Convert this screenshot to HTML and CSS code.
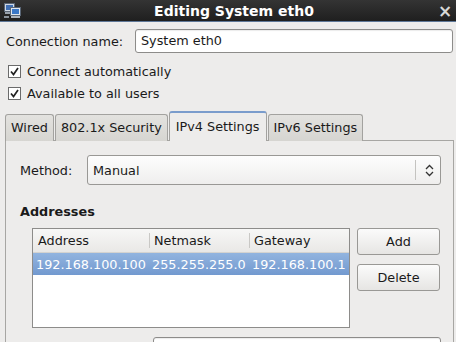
FILE: index.html
```html
<!DOCTYPE html>
<html lang="en">
<head>
  <meta charset="UTF-8" />
  <title>Editing System eth0</title>
  <link rel="stylesheet" href="styles.css">
</head>
<body>
  <div class="window">
    <div class="titlebar">
      <svg class="app-icon" width="18" height="16" viewBox="0 0 18 16">
        <rect x="0.5" y="0.5" width="10" height="8" fill="#cfd8e4" stroke="#5a6676"/>
        <rect x="2" y="2" width="7" height="5" fill="#3f6fb4"/>
        <rect x="1" y="9" width="9" height="2" fill="#9aa3ad"/>
        <rect x="6.5" y="4.5" width="10" height="8" fill="#dfe6ee" stroke="#5a6676"/>
        <rect x="8" y="6" width="7" height="5" fill="#3a78c8"/>
        <rect x="7" y="13" width="9" height="2" fill="#aeb6bf"/>
        <rect x="0" y="13" width="5" height="2" fill="#8a929b"/>
      </svg>
      <span class="title">Editing System eth0</span>
      <span class="close">×</span>
    </div>

    <div class="content">
      <div class="name-row">
        <label class="name-label">Connection name:</label>
        <div class="entry">System eth0</div>
      </div>

      <div class="checks">
        <div class="check-row">
          <svg class="check" width="13" height="13" viewBox="0 0 13 13">
            <rect x="0.5" y="0.5" width="12" height="12" fill="#fff" stroke="#6b6b6b"/>
            <path d="M3 6.5 L5.5 9.5 L10 3" fill="none" stroke="#222" stroke-width="1.7"/>
          </svg>
          <span>Connect automatically</span>
        </div>
        <div class="check-row">
          <svg class="check" width="13" height="13" viewBox="0 0 13 13">
            <rect x="0.5" y="0.5" width="12" height="12" fill="#fff" stroke="#6b6b6b"/>
            <path d="M3 6.5 L5.5 9.5 L10 3" fill="none" stroke="#222" stroke-width="1.7"/>
          </svg>
          <span>Available to all users</span>
        </div>
      </div>

      <div class="notebook">
        <div class="tabs">
          <div class="tab">Wired</div>
          <div class="tab">802.1x Security</div>
          <div class="tab active">IPv4 Settings</div>
          <div class="tab">IPv6 Settings</div>
        </div>
        <div class="panel">
          <div class="method-row">
            <span class="method-label">Method:</span>
            <div class="combo">
              <span class="combo-text">Manual</span>
              <span class="combo-sep"></span>
              <svg class="combo-arrow" width="9" height="13" viewBox="0 0 9 13">
                <path d="M1 5 L4.5 1.5 L8 5 M1 8 L4.5 11.5 L8 8" fill="none" stroke="#333" stroke-width="1.3"/>
              </svg>
            </div>
          </div>

          <div class="section-title">Addresses</div>

          <div class="addresses">
            <div class="tree">
              <div class="tree-head">
                <div class="col c1">Address</div>
                <div class="col c2">Netmask</div>
                <div class="col c3">Gateway</div>
              </div>
              <div class="tree-row selected">
                <div class="cell c1">192.168.100.100</div>
                <div class="cell c2">255.255.255.0</div>
                <div class="cell c3">192.168.100.1</div>
              </div>
            </div>
            <div class="side-buttons">
              <button class="btn">Add</button>
              <button class="btn">Delete</button>
            </div>
          </div>

          <div class="dns-row">
            <div class="entry dns-entry"></div>
          </div>
        </div>
      </div>
    </div>
  </div>
</body>
</html>
```

FILE: styles.css
```css
* {
  margin: 0;
  padding: 0;
  box-sizing: border-box;
}
html, body {
  width: 456px;
  height: 342px;
  overflow: hidden;
}
body {
  background: #edeceb;
  font-family: "DejaVu Sans", sans-serif;
  font-size: 12.8px;
  color: #1a1a1a;
}
.window {
  height: 342px;
  overflow: hidden;
}
.titlebar {
  height: 22px;
  display: flex;
  align-items: center;
  background: linear-gradient(#343434, #1f1f1f);
  border-bottom: 1px solid #5f7898;
}
.app-icon {
  margin-left: 4px;
  margin-top: 1px;
}
.title {
  flex: 1;
  text-align: center;
  color: #fff;
  font-weight: bold;
  font-size: 14px;
  padding-left: 12px;
}
.close {
  width: 22px;
  color: #d8d8d8;
  font-size: 17px;
  font-weight: bold;
  text-align: center;
}
.content {
  padding: 7px 3px 0 5px;
}
.name-row {
  display: flex;
  align-items: center;
  height: 24px;
}
.name-label {
  width: 130px;
  padding-left: 1px;
}
.entry {
  flex: 1;
  height: 24px;
  border: 1px solid #8d8c8a;
  border-radius: 3px;
  background: #fff;
  padding: 2px 5px;
  line-height: 18px;
  box-shadow: inset 0 1px 1px rgba(0, 0, 0, 0.08);
}
.checks {
  margin-top: 7px;
}
.check-row {
  display: flex;
  align-items: center;
  height: 22px;
  padding-left: 3px;
}
.check {
  margin-right: 6px;
}
.notebook {
  margin-top: 7px;
  width: 449px;
}
.tabs {
  display: flex;
  align-items: flex-end;
  height: 30px;
  position: relative;
  z-index: 1;
}
.tab {
  height: 27px;
  padding: 5px 5px 0 5px;
  border: 1px solid #a3a29f;
  border-bottom: none;
  border-radius: 3px 3px 0 0;
  background: linear-gradient(#e3e2df, #d6d5d1);
  margin-right: 1px;
}
.tab.active {
  height: 30px;
  padding: 6px 6px 0 6px;
  background: #edeceb;
  border-top: 2px solid #7a9ccc;
}
.panel {
  border: 1px solid #a7a6a3;
  margin-top: -1px;
  padding: 14px 12px 0 14px;
  height: 205px;
}
.method-row {
  display: flex;
  align-items: center;
  height: 30px;
}
.method-label {
  width: 67px;
}
.combo {
  flex: 1;
  height: 30px;
  display: flex;
  align-items: center;
  border: 1px solid #999895;
  border-radius: 3px;
  background: linear-gradient(#fdfdfd, #efeeed);
}
.combo-text {
  flex: 1;
  padding-left: 5px;
}
.combo-sep {
  width: 1px;
  height: 20px;
  background: #c4c3c0;
}
.combo-arrow {
  margin: 0 6px 0 9px;
}
.section-title {
  font-weight: bold;
  margin-top: 16px;
  height: 22px;
  line-height: 22px;
}
.addresses {
  display: flex;
  margin-top: 5px;
  padding-left: 12px;
}
.tree {
  width: 318px;
  height: 100px;
  border: 1px solid #8d8c8a;
  background: #fff;
}
.tree-head {
  display: flex;
  height: 24px;
  background: linear-gradient(#f7f7f6, #e9e8e6);
  border-bottom: 1px solid #d4d3d0;
}
.col {
  display: flex;
  align-items: center;
  padding-left: 5px;
  position: relative;
}
.col + .col::before {
  content: "";
  position: absolute;
  left: 0;
  top: 4px;
  bottom: 4px;
  width: 1px;
  background: #c9c8c5;
}
.c1 { width: 116px; }
.c2 { width: 100px; }
.c3 { flex: 1; }
.tree-row {
  display: flex;
  height: 22px;
}
.tree-row.selected {
  background: linear-gradient(#92b4df, #7299cf);
  color: #fff;
}
.cell {
  display: flex;
  align-items: center;
  padding-left: 3px;
  white-space: nowrap;
}
.side-buttons {
  display: flex;
  flex-direction: column;
  gap: 9px;
  margin-left: 7px;
}
.btn {
  width: 83px;
  height: 27px;
  font: inherit;
  color: #1a1a1a;
  border: 1px solid #999895;
  border-radius: 3px;
  background: linear-gradient(#fbfbfb, #e6e5e3);
}
.dns-row {
  display: flex;
  margin-top: 9px;
  padding-left: 133px;
}
.dns-entry {
  height: 30px;
  flex: 1;
}
```
